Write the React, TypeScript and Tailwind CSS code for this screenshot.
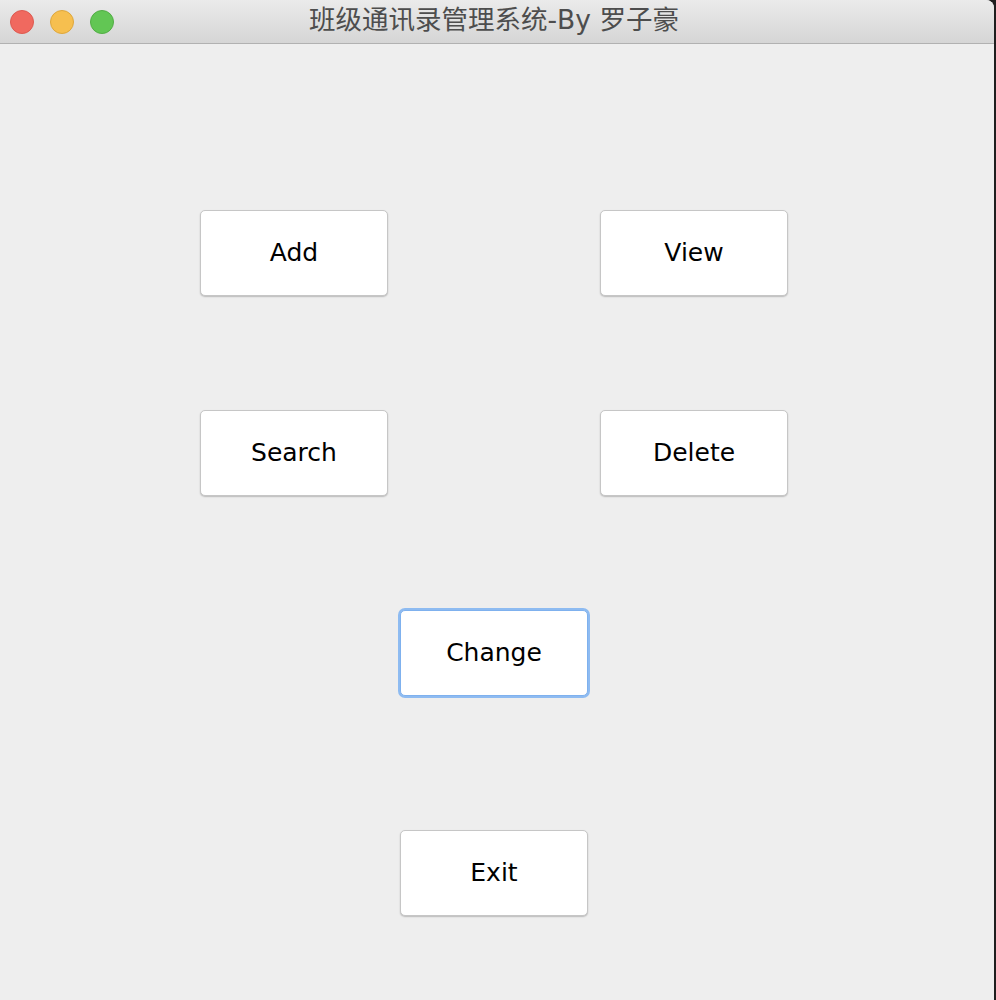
import React from 'react';

const btnBase =
  "w-[188px] h-[86px] rounded-[5px] bg-white text-black text-[25px] flex items-center justify-center font-['DejaVu_Sans',sans-serif]";

function MacButton({ label, focused }: { label: string; focused?: boolean }) {
  return (
    <button
      className={
        focused
          ? `${btnBase} border border-[#7fb1ee] shadow-[0_0_0_2px_#8ebbf1]`
          : `${btnBase} border border-[#c6c6c6] shadow-[0_1px_1.5px_rgba(0,0,0,0.22)]`
      }
    >
      {label}
    </button>
  );
}

export default function App() {
  return (
    <div className="w-[996px] h-[1000px] bg-[#1e1e1e] flex">
      <div className="w-[994px] h-full bg-[#eeeeee] rounded-tr-[8px] overflow-hidden flex flex-col">
        {/* Title bar */}
        <div className="relative h-[44px] shrink-0 bg-gradient-to-b from-[#ebebeb] to-[#d5d5d5] border-b border-[#b1b1b1] flex items-center justify-center">
          <div className="absolute left-[10px] top-[10px] flex gap-[16px]">
            <span className="w-[24px] h-[24px] rounded-full bg-[#f0695f] border border-[#dd5a50]" />
            <span className="w-[24px] h-[24px] rounded-full bg-[#f6bf4f] border border-[#dea73c]" />
            <span className="w-[24px] h-[24px] rounded-full bg-[#62c654] border border-[#52ad45]" />
          </div>
          <span className="text-[26.5px] leading-none text-[#4d4d4d] font-['DejaVu_Sans','Noto_Sans_CJK_SC',sans-serif] pb-[2px] pr-[6px]">
            班级通讯录管理系统-By 罗子豪
          </span>
        </div>

        {/* Content */}
        <div className="flex flex-col pt-[166px]">
          <div className="flex gap-[212px] pl-[200px]">
            <MacButton label="Add" />
            <MacButton label="View" />
          </div>
          <div className="flex gap-[212px] pl-[200px] mt-[114px]">
            <MacButton label="Search" />
            <MacButton label="Delete" />
          </div>
          <div className="flex pl-[400px] mt-[114px]">
            <MacButton label="Change" focused />
          </div>
          <div className="flex pl-[400px] mt-[134px]">
            <MacButton label="Exit" />
          </div>
        </div>
      </div>
    </div>
  );
}
